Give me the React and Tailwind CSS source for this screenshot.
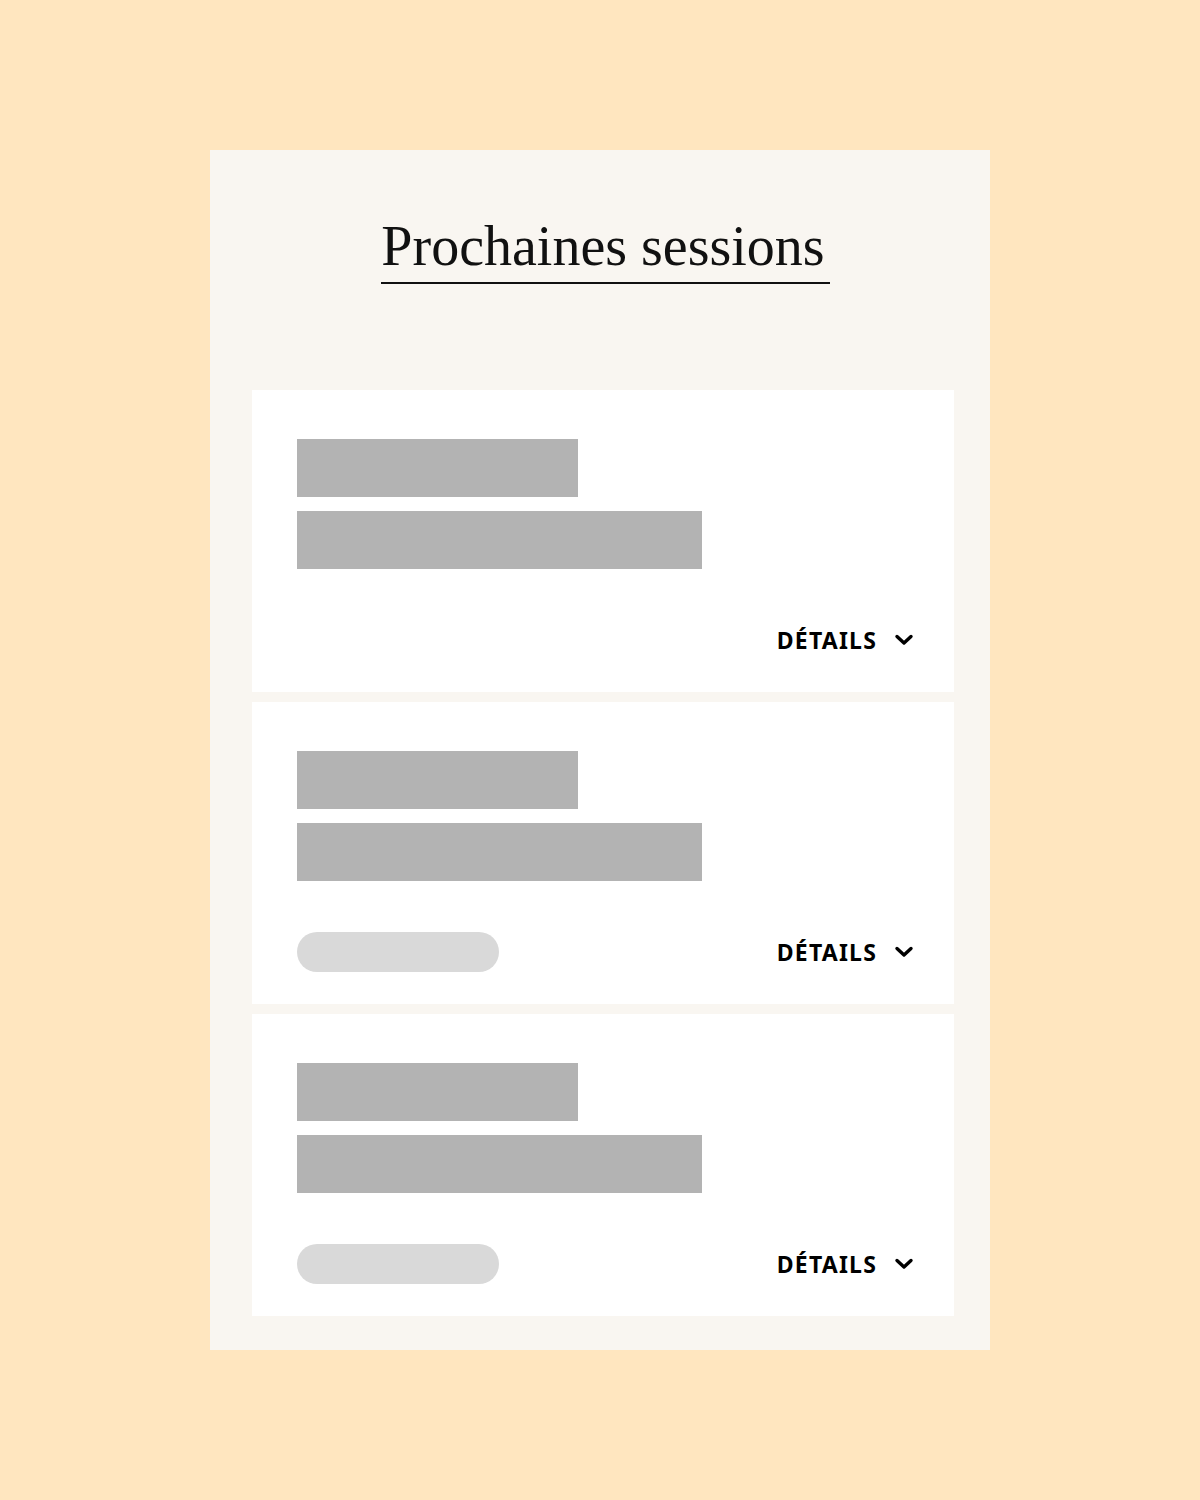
function Bar({ className }) {
  return <div className={`h-[58px] bg-[#b3b3b3] ${className}`} />;
}

function SessionCard({ withTag }) {
  return (
    <div className="bg-white pl-[45px] pr-[40px] pt-[49px] pb-[32px]">
      <div className="flex flex-col gap-[14px]">
        <Bar className="w-[281px]" />
        <Bar className="w-[405px]" />
      </div>
      <div className="mt-[51px] h-10 flex items-center justify-between">
        {withTag ? <div className="w-[202px] h-10 rounded-full bg-[#d9d9d9]" /> : <div />}
        <button className="flex items-center gap-[17px] text-black font-bold text-[23px] tracking-[1.2px] leading-none" style={{ fontFamily: '"Noto Sans", sans-serif' }}>
          DÉTAILS
          <svg width="20" height="12" viewBox="0 0 20 12" fill="none" stroke="#000" strokeWidth="3.4" strokeLinecap="round" strokeLinejoin="round">
            <polyline points="3,2.5 10,9 17,2.5" />
          </svg>
        </button>
      </div>
    </div>
  );
}

export default function App() {
  return (
    <div className="min-h-[1500px] bg-[#ffe6bf] pt-[150px]">
      <div className="mx-auto w-[780px] h-[1200px] bg-[#f9f6f1] pl-[42px] pr-[36px] pt-[68px]">
        <div className="flex flex-col items-center">
          <h1 className="text-[56px] leading-none text-[#111]" style={{ fontFamily: '"Liberation Serif", serif' }}>
            Prochaines sessions
          </h1>
          <div className="mt-[8px] ml-[4px] w-[449px] h-[2px] bg-[#111]" />
        </div>
        <div className="mt-[106px] flex flex-col gap-[10px]">
          <SessionCard />
          <SessionCard withTag />
          <SessionCard withTag />
        </div>
      </div>
    </div>
  );
}
